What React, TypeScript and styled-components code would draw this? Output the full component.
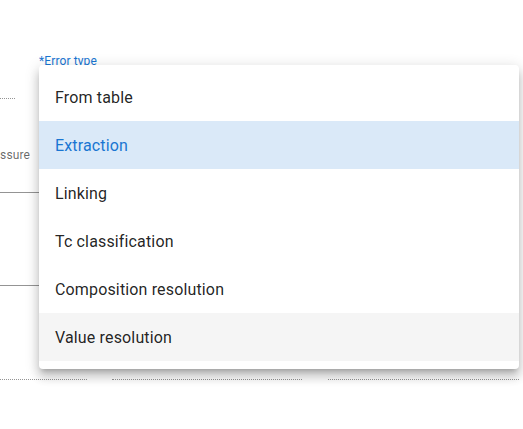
import React from "react";
import styled, { createGlobalStyle } from "styled-components";

const GlobalStyle = createGlobalStyle`
  html, body {
    margin: 0;
    padding: 0;
    background: #ffffff;
  }
  body {
    font-family: Roboto, "Liberation Sans", Arial, sans-serif;
  }
  * { box-sizing: border-box; }
`;

const Page = styled.div`
  position: relative;
  width: 523px;
  height: 429px;
  overflow: hidden;
  background: #ffffff;
`;

const Form = styled.div`
  display: flex;
  flex-direction: column;
  align-items: flex-start;
`;

const FieldLabel = styled.label<{ $active?: boolean }>`
  display: block;
  font-size: 12px;
  line-height: 14px;
  letter-spacing: 0.01em;
  color: ${(p) => (p.$active ? "#1976d2" : "rgba(0, 0, 0, 0.6)")};
  white-space: nowrap;
`;

const ErrorLabel = styled(FieldLabel)`
  margin: 54px 0 0 39px;
`;

const Underline = styled.div<{ $w: number; $h: number; $dotted?: boolean }>`
  width: ${(p) => p.$w}px;
  height: ${(p) => p.$h}px;
  border-bottom: 1px ${(p) => (p.$dotted ? "dotted" : "solid")} rgba(0, 0, 0, 0.42);
  flex: none;
`;

const ClippedLabel = styled.div`
  width: 30px;
  margin-top: 49px;
  overflow: hidden;
  display: flex;
  justify-content: flex-end;
`;

const BottomRow = styled.div`
  display: flex;
  align-items: flex-end;
  height: 94px;
`;

const Gap = styled.div<{ $w: number }>`
  width: ${(p) => p.$w}px;
  flex: none;
`;

const Menu = styled.ul`
  position: absolute;
  left: 39px;
  top: 65px;
  width: 480px;
  margin: 0;
  padding: 8px 0;
  list-style: none;
  background: #ffffff;
  border-radius: 4px;
  box-shadow: 0px 5px 5px -3px rgba(0, 0, 0, 0.2),
    0px 8px 10px 1px rgba(0, 0, 0, 0.14),
    0px 3px 14px 2px rgba(0, 0, 0, 0.12);
`;

const MenuItem = styled.li<{ $selected?: boolean; $hover?: boolean }>`
  display: flex;
  align-items: center;
  height: 48px;
  padding: 2px 16px 0;
  font-size: 16px;
  line-height: 24px;
  letter-spacing: 0.00938em;
  color: ${(p) => (p.$selected ? "#1976d2" : "rgba(0, 0, 0, 0.87)")};
  background: ${(p) =>
    p.$selected
      ? "rgba(25, 118, 210, 0.16)"
      : p.$hover
      ? "rgba(0, 0, 0, 0.04)"
      : "transparent"};
  cursor: pointer;
`;

const options = [
  "From table",
  "Extraction",
  "Linking",
  "Tc classification",
  "Composition resolution",
  "Value resolution",
];

export default function App() {
  return (
    <Page>
      <GlobalStyle />
      <Form>
        <ErrorLabel $active>*Error type</ErrorLabel>
        <Underline $w={15} $h={31} $dotted />
        <ClippedLabel>
          <FieldLabel>Pressure</FieldLabel>
        </ClippedLabel>
        <Underline $w={120} $h={31} />
        <Underline $w={120} $h={93} />
        <BottomRow>
          <Underline $w={87} $h={1} $dotted />
          <Gap $w={25} />
          <Underline $w={190} $h={1} $dotted />
          <Gap $w={26} />
          <Underline $w={191} $h={1} $dotted />
        </BottomRow>
      </Form>
      <Menu role="listbox">
        {options.map((o) => (
          <MenuItem
            key={o}
            role="option"
            $selected={o === "Extraction"}
            $hover={o === "Value resolution"}
          >
            {o}
          </MenuItem>
        ))}
      </Menu>
    </Page>
  );
}
